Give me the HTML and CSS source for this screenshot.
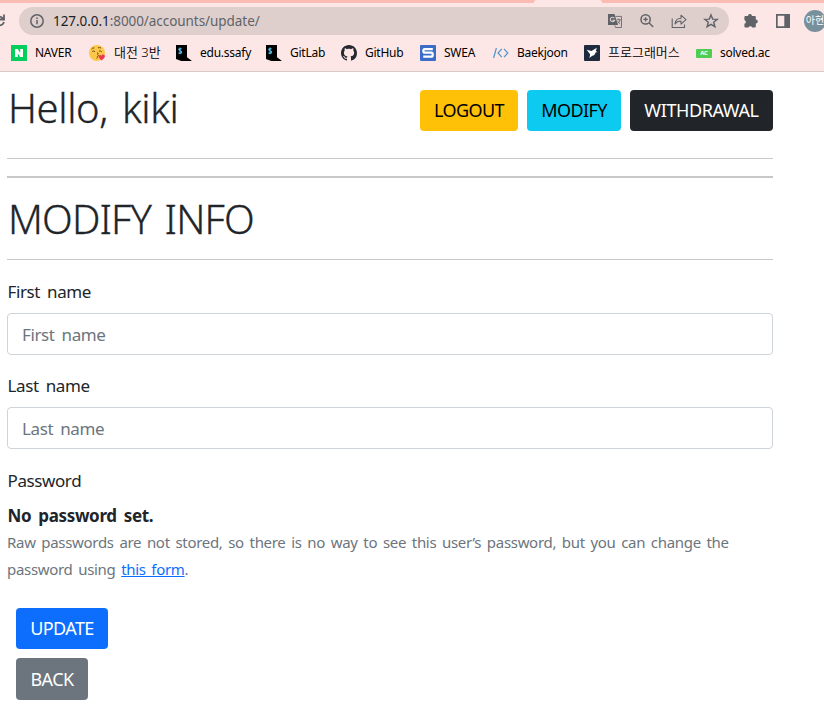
FILE: index.html
```
<!DOCTYPE html>
<html lang="ko">
<head>
<meta charset="utf-8">
<title>Modify info</title>
<link rel="stylesheet" href="styles.css">
</head>
<body>
<header class="browser">
  <div class="tabs"><i class="tab-active"></i></div>
  <div class="toolbar">
    <svg class="reload" width="6" height="16" viewBox="0 0 6 16"><path d="M0 3.6Q2 4 3.2 6M4 1.5V6.5H0M0 12.4Q3 12 4 9" fill="none" stroke="#5f6368" stroke-width="1.8"/></svg>
    <div class="address">
      <svg class="info" width="16" height="16" viewBox="0 0 16 16"><circle cx="8" cy="8" r="6.2" fill="none" stroke="#5f6368" stroke-width="1.5"/><path d="M8 7v4.2M8 4.4v1.5" stroke="#5f6368" stroke-width="1.5"/></svg>
      <span class="url"><b>127.0.0.1</b>:8000/accounts/update/</span>
      <span class="actions">
        <svg width="16" height="16" viewBox="0 0 16 16"><path d="M1 1h6.5l3.5 11H1z" fill="#5f6368"/><path d="M8.5 3.4H14.5V14.5H8.5L7.8 12.4" fill="none" stroke="#777476" stroke-width="1"/><path d="M7.4 5.3A2.2 2.2 0 1 0 7.6 7.3H5.4" fill="none" stroke="#decfcd" stroke-width="1.1"/><path d="M9.8 6.7h4M11.8 5.6v1M13 6.9q-.7 2.5-2.6 3.6M10.7 8.3q1 1.6 2.5 2.5" fill="none" stroke="#6b6b6e" stroke-width=".9"/></svg>
        <svg width="16" height="16" viewBox="0 0 16 16"><circle cx="6.6" cy="6.4" r="4.6" fill="none" stroke="#5f6368" stroke-width="1.5"/><path d="M10 9.8l4.2 4.2M4.4 6.4h4.4M6.6 4.2v4.4" fill="none" stroke="#5f6368" stroke-width="1.4"/></svg>
        <svg width="16" height="16" viewBox="0 0 16 16"><path d="M1.2 5.5v9h12.3V11.5M4 11q.5-5.7 6-5.8V2.2l5 4.5-5 4.4V8Q6 8 4 11z" fill="none" stroke="#5f6368" stroke-width="1.1" stroke-linejoin="round"/></svg>
        <svg width="16" height="16" viewBox="0 0 16 16"><path d="M8 1.9l1.7 4.2 4.5.3-3.5 2.9 1.2 4.4L8 11.3l-3.9 2.4 1.2-4.4L1.8 6.4l4.5-.3z" fill="none" stroke="#5f6368" stroke-width="1.4"/></svg>
      </span>
    </div>
    <svg class="puzzle" width="16" height="16" viewBox="0 0 16 16"><path d="M1.4 4.1q0-1 1-1H5a2 2 0 0 1 4-.2h2.8q1 0 1 1v2.6a2 2 0 0 1 0 4v3.1q0 1-1 1H9.2a1.9 1.9 0 0 0-3.7 0H2.4q-1 0-1-1v-2.8a1.9 1.9 0 0 0 0-3.7z" fill="#5f6368"/></svg>
    <svg class="panel" width="14" height="14" viewBox="0 0 14 14"><path d="M0 0h14v14H0zM1.7 1.8v10.4h6.6V1.8z" fill="#5f6368" fill-rule="evenodd"/></svg>
    <span class="avatar">아현</span>
  </div>
  <nav class="bookmarks">
    <a class="bm naver"><svg width="16" height="16" viewBox="0 0 16 16"><path fill="#03cf5d" d="M0 0h16v16H0z"/><path fill="#fff" d="M4 4h2.8L9.2 8V4H12v8H9.2L6.8 8.2V12H4z"/></svg><span>NAVER</span></a>
    <a class="bm class3"><svg width="17" height="16" viewBox="0 0 17 16"><circle cx="8" cy="8" r="8" fill="#fdc849"/><path d="M2.5 4.2q1-1.5 2.8-1.3M9 2.8q1.5-.7 3 .3M3.3 6.5q1.5-1.2 2.7.2M10 6.2q1.8-.7 2.8.6M8 7.7q2 .3.6 1.8q1.8.6-.3 2.1q1.2 1-.8 1.8" fill="none" stroke="#684a22"/><path d="M12.4 15.5Q8.7 12 9.8 10.5q1.3-1.2 2.5.3q1.2-2 3-.9q2 2-2.9 5.6z" fill="#ed3652"/></svg><span class="ko">대전 3반</span></a>
    <a class="bm edu"><svg width="16" height="16" viewBox="0 0 16 16"><path d="M0 0h11v12.2l5 3.8H5.2L0 14z"/><path d="M5.6 3.7H3.6Q2 4 3.4 5.3l1.6.8q1.4 1.6-.2 2H2.5M4.1 2.6v6.7" fill="none" stroke="#55c0ea" stroke-width="1.1"/></svg><span>edu.ssafy</span></a>
    <a class="bm gitlab"><svg width="16" height="16" viewBox="0 0 16 16"><path d="M0 0h11v12.2l5 3.8H5.2L0 14z"/><path d="M5.6 3.7H3.6Q2 4 3.4 5.3l1.6.8q1.4 1.6-.2 2H2.5M4.1 2.6v6.7" fill="none" stroke="#55c0ea" stroke-width="1.1"/></svg><span>GitLab</span></a>
    <a class="bm github"><svg width="16" height="16" viewBox="0 0 16 16"><path fill="#24292f" d="M8 0C3.58 0 0 3.58 0 8c0 3.54 2.29 6.53 5.47 7.59.4.07.55-.17.55-.38 0-.19-.01-.82-.01-1.49-2.01.37-2.53-.49-2.69-.94-.09-.23-.48-.94-.82-1.13-.28-.15-.68-.52-.01-.53.63-.01 1.08.58 1.23.82.72 1.21 1.87.87 2.33.66.07-.52.28-.87.51-1.07-1.78-.2-3.64-.89-3.64-3.95 0-.87.31-1.59.82-2.15-.08-.2-.36-1.02.08-2.12 0 0 .67-.21 2.2.82.64-.18 1.32-.27 2-.27s1.36.09 2 .27c1.53-1.04 2.2-.82 2.2-.82.44 1.1.16 1.92.08 2.12.51.56.82 1.27.82 2.15 0 3.07-1.87 3.75-3.65 3.95.29.25.54.73.54 1.48 0 1.07-.01 1.93-.01 2.2 0 .21.15.46.55.38A8.01 8.01 0 0 0 16 8c0-4.42-3.58-8-8-8z"/></svg><span>GitHub</span></a>
    <a class="bm swea"><svg width="16" height="16" viewBox="0 0 16 16"><rect width="16" height="16" rx="1" fill="#3b6cc7"/><path d="M12.8 4.2H4.7q-1.3 0-1.3 1.7t1.3 1.8h6.7q1.3 0 1.3 2t-1.3 2H3.2" fill="none" stroke="#fff" stroke-width="2.3"/></svg><span>SWEA</span></a>
    <a class="bm baek"><svg width="16" height="16" viewBox="0 0 16 16"><path d="M.6 13L3.4 3M8.8 3.8L5 8l3.8 4.2M11 3.8L14.8 8 11 12.2" fill="none" stroke="#4c94cb" stroke-width="1.2"/></svg><span>Baekjoon</span></a>
    <a class="bm prog"><svg width="16" height="16" viewBox="0 0 16 16"><rect width="16" height="16" rx="1" fill="#1e2a3e"/><path d="M2.7 4.8l4.8 1.3L12.8 2.7l-1 3.3 1.7 1-2 .6q-.5 3-3.2 3.2L5.4 13l.8-3.4z" fill="#fff"/></svg><span class="ko">프로그래머스</span></a>
    <a class="bm solved"><i class="ac">AC</i><span>solved.ac</span></a>
  </nav>
</header>
<main class="page">
  <section class="greeting">
    <h1 class="hello">Hello, kiki</h1>
    <div class="btns"><a class="btn logout">LOGOUT</a><a class="btn modify">MODIFY</a><a class="btn withdraw">WITHDRAWAL</a></div>
  </section>
  <hr><hr class="thick">
  <h1 class="title">MODIFY INFO</h1>
  <hr class="last">
  <form>
    <label class="lbl">First name</label>
    <div class="field">First name</div>
    <label class="lbl">Last name</label>
    <div class="field">Last name</div>
    <label class="lbl pw">Password</label>
    <p class="strong">No password set.</p>
    <p class="help">Raw passwords are not stored, so there is no way to see this user’s password, but you can change the<br>password using <a>this form</a>.</p>
    <div class="submit"><a class="btn update">UPDATE</a><a class="btn back">BACK</a></div>
  </form>
</main>
</body>
</html>
```
FILE: styles.css
```
* { box-sizing: border-box; }
body { margin: 0; background: #fff; color: #212529; font-family: "Noto Sans", "Noto Sans CJK KR", sans-serif; font-size: 17px; font-weight: 400; overflow: hidden; }
svg { flex: none; }
.browser { height: 72px; background: #fde7e6; border-bottom: 1px solid #d9c9c8; }
.tabs { height: 3px; background: #fbbdb3; padding-left: 534px; }
.tab-active { display: block; width: 68px; height: 3px; background: #fde7e6; border-radius: 3px 3px 0 0; }
.toolbar { height: 36px; display: flex; align-items: center; }
.reload { width: 6px; margin-right: 13px; }
.address { flex: none; width: 710px; height: 28px; border-radius: 14px; background: #decfcd; display: flex; align-items: center; padding: 0 10px; }
.url { margin-left: 8px; font-size: 13.5px; color: #5f6368; letter-spacing: -.06px; white-space: nowrap; }
.url b { font-weight: 400; color: #202124; }
.actions { margin-left: auto; display: flex; gap: 16px; }
.puzzle { margin-left: 14px; }
.panel { margin-left: 17px; }
.avatar { flex: none; margin-left: 14px; width: 22px; height: 22px; border-radius: 50%; background: #78909c; color: #fff; font-size: 10px; line-height: 21px; text-align: center; white-space: nowrap; }
.bookmarks { display: flex; padding-left: 11px; height: 28px; }
.bm { display: flex; align-items: center; height: 28px; gap: 8px; font-size: 12px; letter-spacing: -.25px; color: #000; flex: none; white-space: nowrap; }
.bm span { margin-top: -1px; }
.bm .ko { font-size: 13px; font-weight: 350; letter-spacing: 0; line-height: 16px; margin-top: -2px; }
.naver { width: 78px; } .class3 { width: 87px; } .edu { width: 90px; } .gitlab { width: 75px; }
.github { width: 79px; } .swea { width: 73px; } .baek { width: 91px; } .prog { width: 112px; }
.ac { width: 16px; height: 9px; border-radius: 1px; background: #4fcc52; color: #fff; font: 700 6px/9px "Noto Sans", sans-serif; text-align: center; }
.page { width: 773px; padding-left: 7px; }
.greeting { display: flex; justify-content: space-between; height: 86px; padding-top: 18px; }
h1 { font-weight: 300; font-size: 40px; line-height: 48px; margin: 0; letter-spacing: -.4px; word-spacing: 4px; -webkit-text-stroke: .3px #212529; }
.hello { margin-top: -6px; padding-left: 1px; }
.btns { display: flex; gap: 9px; }
.btn { display: block; height: 41px; border-radius: 4px; font-size: 18px; line-height: 41px; letter-spacing: -.6px; text-align: center; color: #fff; }
.logout { width: 98px; background: #ffc107; color: #000; }
.modify { width: 94px; background: #0dcaf0; color: #000; }
.withdraw { width: 143px; background: #212529; letter-spacing: -.4px; }
hr { margin: 0; border: 0; height: 1px; background: #c8c8c9; }
.thick { height: 2px; margin-top: 17px; }
.title { padding: 17px 0 0 1px; height: 81px; letter-spacing: -.85px; }
.last { margin: 0 0 17px; }
form { letter-spacing: -.4px; word-spacing: 3px; }
.lbl { display: block; height: 36px; line-height: 30px; padding-left: .5px; }
.field { height: 42px; border: 1px solid #ced4da; border-radius: 4px; padding-left: 14px; line-height: 41px; color: #6c757d; margin-bottom: 16px; }
.pw { height: 38px; line-height: 31px; }
.strong { margin: 0; font-weight: 700; line-height: 26px; letter-spacing: -.35px; padding-left: .5px; }
.help { margin: 0; font-size: 15px; line-height: 27px; letter-spacing: -.31px; word-spacing: 2.1px; color: #6c757d; white-space: nowrap; }
.help a { color: #0d6efd; text-decoration: underline; }
.submit { margin: 25px 0 0 9px; }
.update { width: 92px; background: #0d6efd; }
.back { width: 72px; height: 42px; margin-top: 9px; line-height: 42px; background: #6c757d; }
```
